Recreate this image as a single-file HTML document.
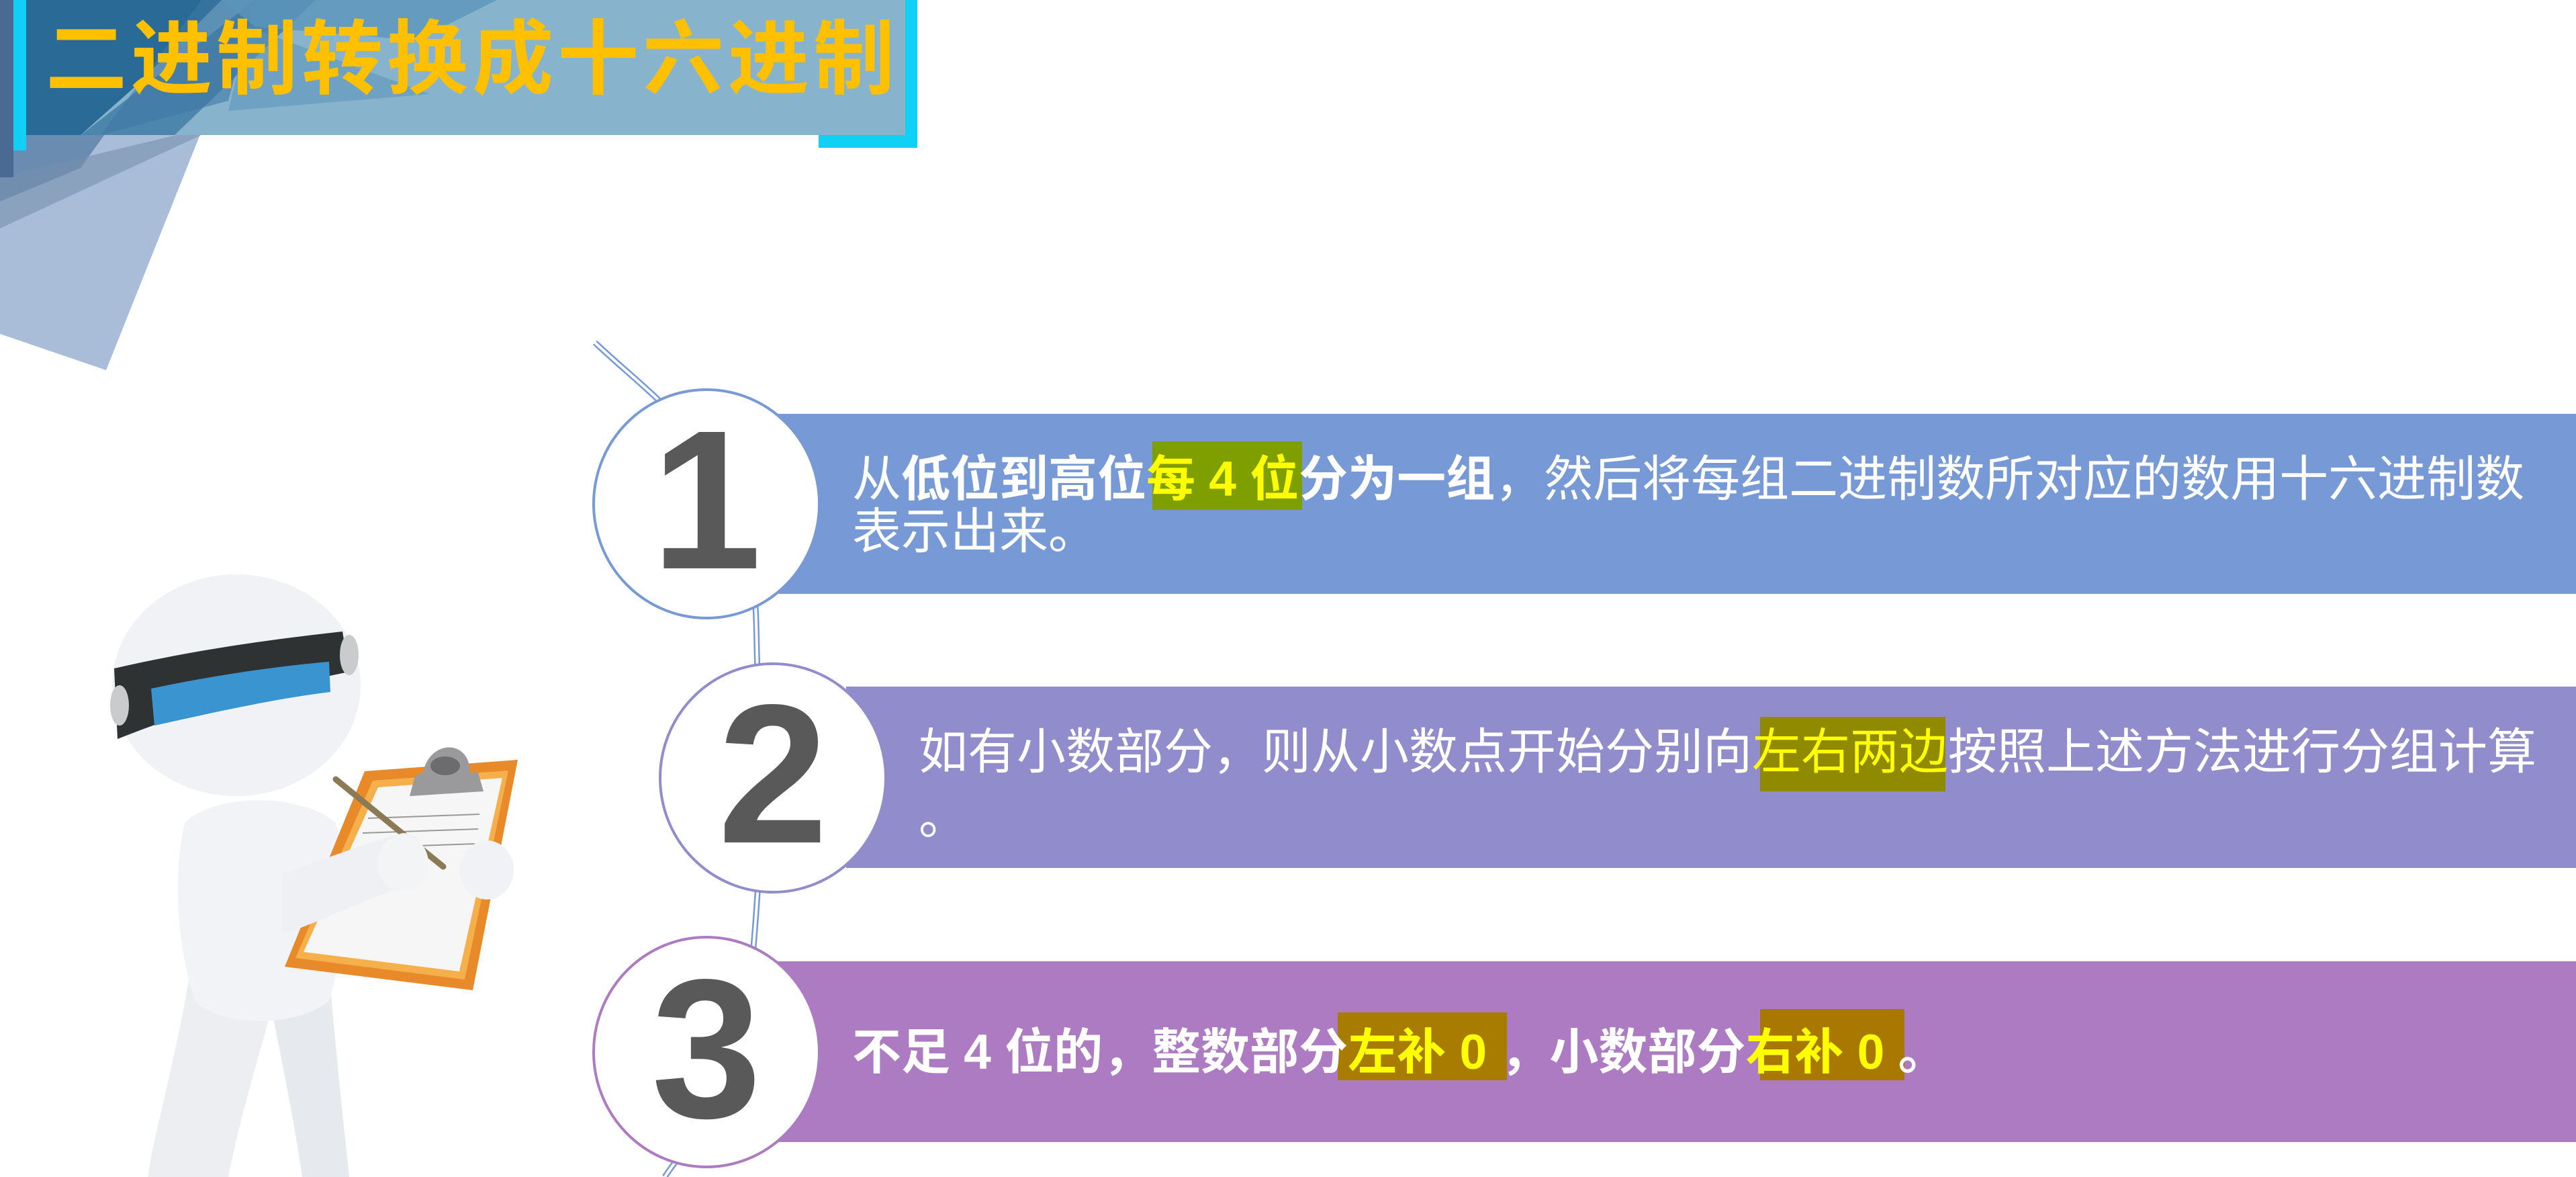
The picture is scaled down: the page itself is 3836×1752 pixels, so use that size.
<!DOCTYPE html>
<html><head><meta charset="utf-8">
<style>
html,body{margin:0;padding:0}
body{width:3836px;height:1752px;position:relative;overflow:hidden;background:#fff;font-family:"Liberation Sans","Noto Sans CJK SC",sans-serif}
.abs{position:absolute}
.t{position:absolute;color:#fff;font-size:73px;white-space:pre;line-height:1}
.hl{color:#ffff00}
.num{position:absolute;color:#595959;font-weight:bold;font-family:"Liberation Sans",sans-serif;text-align:center;line-height:1}
</style></head><body>

<svg class="abs" style="left:0;top:0" width="3836" height="1752" viewBox="0 0 3836 1752">
  <polygon points="0,0 378,0 158,551 0,497" fill="#a9bdd8"/>
  <polygon points="0,0 300,0 120,250 0,300" fill="#5a7fa6" opacity="0.8"/>
  <polygon points="0,264 263,201 300,201 0,340" fill="#7890ad" opacity="0.6"/>
  <rect x="20" y="0" width="1330" height="201" fill="#87b3cc"/>
  <polygon points="20,0 330,0 200,130 120,201 20,201" fill="#2a6a97"/>
  <polygon points="120,201 380,0 470,0 260,201" fill="#3f7aa5" opacity="0.8"/>
  <polygon points="300,0 380,0 340,150 150,201" fill="#3f78a3" opacity="0.6"/>
  <polygon points="330,0 740,0 620,60 380,40" fill="#5d95ba" opacity="0.8"/>
  <polygon points="370,40 640,140 340,165" fill="#5d95ba" opacity="0.6"/>
  <rect x="0" y="0" width="20" height="264" fill="#4a6a94"/>
  <rect x="20" y="0" width="19" height="224" fill="#12d0f5"/>
  <rect x="1348" y="0" width="18" height="220" fill="#12d0f5"/>
  <rect x="1219" y="201" width="147" height="19" fill="#12d0f5"/>

  <path d="M886,510 C960,580 1050,640 1100,760 C1130,850 1125,930 1128,1000 C1132,1100 1130,1250 1128,1330 C1120,1450 1110,1550 1090,1600 C1050,1680 1010,1720 990,1752" fill="none" stroke="#7799d6" stroke-width="9"/>
  <path d="M886,510 C960,580 1050,640 1100,760 C1130,850 1125,930 1128,1000 C1132,1100 1130,1250 1128,1330 C1120,1450 1110,1550 1090,1600 C1050,1680 1010,1720 990,1752" fill="none" stroke="#fff" stroke-width="4"/>

  <rect x="1150" y="616" width="2686" height="268" fill="#7799d6"/>
  <rect x="1260" y="1022" width="2576" height="270" fill="#918ccc"/>
  <rect x="1150" y="1431" width="2686" height="269" fill="#ad7bc2"/>

  <ellipse cx="1052" cy="750" rx="168" ry="170" fill="#fff" stroke="#7799d6" stroke-width="4"/>
  <ellipse cx="1151" cy="1158" rx="168" ry="170" fill="#fff" stroke="#918ccc" stroke-width="4"/>
  <ellipse cx="1052" cy="1566" rx="168" ry="171" fill="#fff" stroke="#ad7bc2" stroke-width="4"/>

  <g>
    <path d="M290,1400 C270,1550 230,1680 220,1752 L340,1752 C360,1650 390,1560 410,1480 Z" fill="#eceef2"/>
    <path d="M400,1480 C420,1580 440,1680 450,1752 L520,1752 C510,1660 500,1560 490,1450 Z" fill="#e6e9ee"/>
    <path d="M275,1225 C320,1180 450,1180 500,1225 C520,1300 510,1430 490,1490 C440,1530 330,1530 290,1490 C262,1400 258,1300 275,1225 Z" fill="#f1f3f6"/>
    <polygon points="543,1148 771,1131 704,1474 424,1439" fill="#e98a2a"/>
    <polygon points="555,1162 757,1147 692,1458 440,1426" fill="#f5b04c"/>
    <polygon points="563,1172 748,1158 684,1446 452,1417" fill="#f6f6f6"/>
    <line x1="548" y1="1218" x2="714" y2="1212" stroke="#999" stroke-width="2"/>
    <line x1="540" y1="1240" x2="712" y2="1234" stroke="#999" stroke-width="2"/>
    <line x1="532" y1="1262" x2="708" y2="1256" stroke="#999" stroke-width="2"/>
    <path d="M610,1185 L720,1178 L712,1150 L700,1150 C700,1100 640,1100 630,1150 L618,1155 Z" fill="#9a9a9c"/>
    <ellipse cx="663" cy="1140" rx="22" ry="14" fill="#6c6c6e"/>
    <line x1="500" y1="1160" x2="660" y2="1290" stroke="#8a7a55" stroke-width="9" stroke-linecap="round"/>
    <path d="M420,1300 C480,1280 560,1250 600,1240 C640,1240 640,1300 600,1320 C540,1340 460,1380 420,1390 Z" fill="#eef0f3"/>
    <ellipse cx="600" cy="1285" rx="38" ry="42" fill="#f3f4f6"/>
    <ellipse cx="725" cy="1295" rx="40" ry="44" fill="#f1f2f5"/>
    <ellipse cx="352" cy="1020" rx="185" ry="165" fill="#f0f2f5"/>
    <path d="M170,995 C300,965 420,950 510,940 L520,1000 C420,1020 300,1050 175,1100 Z" fill="#2f3233"/>
    <path d="M225,1025 C320,1005 410,992 490,985 L492,1030 C410,1040 320,1060 230,1080 Z" fill="#3a94cf"/>
    <ellipse cx="178" cy="1050" rx="14" ry="30" fill="#c9cbcd"/>
    <ellipse cx="520" cy="975" rx="14" ry="30" fill="#c9cbcd"/>
  </g>
</svg>

<div class="abs" style="left:68px;top:28px;font-size:121px;font-weight:bold;color:#ffc000;letter-spacing:6px;white-space:nowrap;line-height:1;font-family:'Liberation Sans','Noto Sans CJK SC',sans-serif">二进制转换成十六进制</div>

<div class="num" style="left:952px;top:597px;width:200px;font-size:295px">1</div>
<div class="num" style="left:1051px;top:1005px;width:200px;font-size:295px">2</div>
<div class="num" style="left:952px;top:1414px;width:200px;font-size:295px">3</div>

<div class="abs" style="left:1716px;top:657px;width:223px;height:102px;background:#7f9f00"></div>
<div class="t" style="left:1269px;top:677px"><span>从</span><b>低位到高位<span class="hl">每 4 位</span>分为一组</b>，然后将每组二进制数所对应的数用十六进制数</div>
<div class="t" style="left:1269px;top:755px">表示出来。</div>

<div class="abs" style="left:2621px;top:1067px;width:276px;height:111px;background:#8f8a00"></div>
<div class="t" style="left:1368px;top:1083px">如有小数部分，则从小数点开始分别向<span class="hl">左右两边</span>按照上述方法进行分组计算</div>
<div class="t" style="left:1368px;top:1180px">。</div>

<div class="abs" style="left:1992px;top:1507px;width:252px;height:101px;background:#a87c00"></div>
<div class="abs" style="left:2621px;top:1502px;width:215px;height:106px;background:#a87800"></div>
<div class="t" style="left:1269px;top:1530px;font-weight:bold">不足 4 位的，整数部分<span class="hl">左补 0 </span>，小数部分<span class="hl">右补 0 </span>。</div>

</body></html>
